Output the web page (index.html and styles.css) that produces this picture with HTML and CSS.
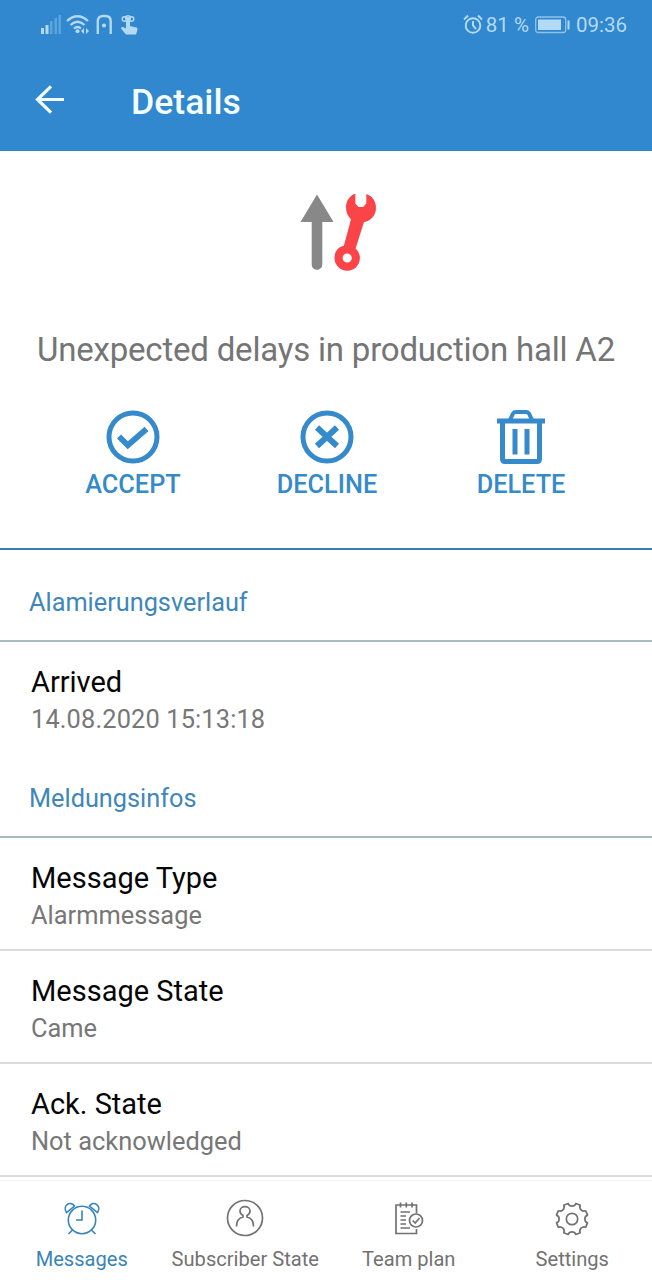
FILE: index.html
```html
<!DOCTYPE html>
<html lang="en">
<head>
<meta charset="utf-8">
<title>Details</title>
<link rel="stylesheet" href="styles.css">
</head>
<body>
<div class="app">
  <header class="header">
    <div class="status">
      <svg class="status-left" width="100" height="30" viewBox="0 0 100 30" fill="none">
        <g fill="#b4d9f3"><rect x="1" y="18" width="3" height="6"/><rect x="5.500" y="15" width="3" height="9"/></g>
        <g fill="#5ca4dc"><rect x="10" y="11" width="2.500" height="13"/><rect x="14.500" y="8" width="2.500" height="16"/><rect x="18.500" y="5" width="2.500" height="19"/></g>
        <g stroke="#b4d9f3" stroke-width="2.300"><path d="M27 11Q37.500 1.500 48 11M30.500 15Q37.500 8.500 44.500 15M34 18.500Q37.500 15.500 41 18.500"/><path d="M57.800 24V11Q57.800 6 63 6H65.500Q70.700 6 70.700 11V24" stroke-width="2.400"/></g>
        <g fill="#b4d9f3"><circle cx="37.500" cy="21.300" r="2"/><path d="M41 21l3-3v6zM49 21l-3-3v6z"/><circle cx="64" cy="15.500" r="2.100"/><path d="M86 8q2-2 4 0v8l6.500 1.500q1.500.5 1 2L96 24.500H86l-5-6q0-2 2-1.500l3 1.500z"/></g>
        <g stroke="#b4d9f3" stroke-width="1.400"><circle cx="84.500" cy="9" r="2.300"/><circle cx="91.500" cy="9" r="2.300"/><circle cx="88" cy="8" r="2.300"/></g>
      </svg>
      <div class="status-right">
        <svg width="20" height="22" viewBox="0 0 20 22" fill="none" stroke="#b4d9f3" stroke-width="2"><circle cx="10" cy="11.500" r="7.300"/><path d="M10 7V11.500l3 3.500M1 5.500l4-4M19 5.500l-4-4"/></svg>
        <span class="percent">81 %</span>
        <svg class="battery" width="36" height="18" viewBox="0 0 36 18"><rect x=".7" y="1" width="30" height="15.500" rx="2.500" fill="none" stroke="#8fc2ea" stroke-width="1.300"/><path d="M3 3.500h23v10.500H3zM32.500 4.500h2v9h-2z" fill="#b4d9f3"/></svg>
        <span class="clock">09:36</span>
      </div>
    </div>
    <div class="titlebar">
      <svg width="30" height="30" viewBox="0 0 30 30" fill="none" stroke="#f4fdff" stroke-width="3.200"><path d="M29 14.500H3M16 1.300L2.500 14.500 16 27.700"/></svg>
      <h1 class="title">Details</h1>
    </div>
  </header>
  <main>
    <section class="summary">
      <svg class="alarm-icon" width="78" height="80" viewBox="0 0 78 80">
        <path d="M17 2.500L33.500 30H22.300v42.500a5.300 5.300 0 0 1-10.600 0V30H.500z" fill="#888"/>
        <path d="M55.300 1.800C49.500 3.700 46 9 46 15.500c0 5 2 9 5 11.800L43.800 54C38 54.500 34.500 60 34.500 66a12.700 12.700 0 0 0 25.400 0c0-4-2-7.500-4.300-9.500L64 30C71 29 76 23 76 16c0-6.500-3.500-12-9.700-14v9.500l-3.200 3.500h-4.500l-3.300-3.500zM47.200 61.400a4.600 4.600 0 1 1 0 9.200 4.600 4.600 0 0 1 0-9.200z" fill="#fb4447" fill-rule="evenodd"/>
      </svg>
      <p class="subject">Unexpected delays in production hall A2</p>
      <div class="actions">
        <div class="action">
          <svg width="56" height="56" viewBox="0 0 56 56" fill="none" stroke="#348aca"><circle cx="28" cy="28" r="24" stroke-width="5"/><path d="M14 27.500l8.800 8.800L41.500 20" stroke-width="5.800"/></svg>
          <span>ACCEPT</span>
        </div>
        <div class="action">
          <svg width="56" height="56" viewBox="0 0 56 56" fill="none" stroke="#348aca"><circle cx="28" cy="28" r="24" stroke-width="5"/><path d="M18 18.500l20 18.500M38 18.500l-20 18.500" stroke-width="6"/></svg>
          <span>DECLINE</span>
        </div>
        <div class="action">
          <svg width="56" height="56" viewBox="0 0 56 56" fill="none" stroke="#348aca"><path d="M4 12h48" stroke-width="5"/><path d="M17 11l3-6.500q1-1.500 3-1.500h10q2 0 3 1.500l3 6.500" stroke-width="4"/><path d="M9.500 12v38q0 2.500 2.500 2.500h32q2.500 0 2.500-2.500V12" stroke-width="5"/><path d="M22 20v25.500M34 20v25.500" stroke-width="5"/></svg>
          <span>DELETE</span>
        </div>
      </div>
    </section>
    <h2 class="section">Alamierungsverlauf</h2>
    <div class="row first"><div class="label">Arrived</div><div class="value date">14.08.2020 15:13:18</div></div>
    <h2 class="section">Meldungsinfos</h2>
    <div class="row"><div class="label">Message Type</div><div class="value">Alarmmessage</div></div>
    <div class="row"><div class="label">Message State</div><div class="value">Came</div></div>
    <div class="row"><div class="label">Ack. State</div><div class="value">Not acknowledged</div></div>
  </main>
  <nav class="tabs">
    <div class="tab active">
      <svg width="40" height="40" viewBox="0 0 40 40" fill="none" stroke="currentColor" stroke-width="1.600"><circle cx="20" cy="21" r="13.700"/><path d="M20 11.500V21H14M10.500 31l-4 4M29.500 31l4 4M4.500 13.500C0 7 8 1 12.500 7zM35.500 13.500C40 7 32 1 27.500 7z"/></svg>
      <span>Messages</span>
    </div>
    <div class="tab">
      <svg width="40" height="40" viewBox="0 0 40 40" fill="none" stroke="currentColor" stroke-width="1.700"><circle cx="20" cy="19" r="17.500"/><path d="M11.500 27.500c0-5.500 2-8.500 6.500-9.500v-1.500c-2-1-3-2.500-3-4.500a5 4.300 0 0 1 10 0c0 2-1 3.500-3 4.500V18c4.500 1 6.500 4 6.500 9.500"/></svg>
      <span>Subscriber State</span>
    </div>
    <div class="tab">
      <svg width="40" height="40" viewBox="0 0 40 40" fill="none" stroke="currentColor" stroke-width="1.700"><path d="M27.500 14.500V6H7v28.500h20.500V30M11.500 3.500v5M17.300 3.500v5M23 3.500v5M11.500 13H21M11.500 17H17M11.500 21H17M11.500 25H17M11.500 29H21"/><circle cx="27" cy="21.500" r="6.500"/><path d="M23.700 21.500l2.500 2.500 4.300-5"/></svg>
      <span>Team plan</span>
    </div>
    <div class="tab">
      <svg width="40" height="40" viewBox="-20 -20 40 40" fill="none" stroke="currentColor" stroke-width="1.700" stroke-linejoin="round"><path d="M-3.900-15.500A4.200 4.200 0 0 0 3.900-15.500L8.200-13.700A4.200 4.200 0 0 0 13.700-8.200L15.500-3.900A4.200 4.200 0 0 0 15.500 3.900L13.700 8.200A4.200 4.200 0 0 0 8.200 13.700L3.900 15.500A4.200 4.200 0 0 0-3.900 15.500L-8.200 13.700A4.200 4.200 0 0 0-13.700 8.200L-15.500 3.900A4.200 4.200 0 0 0-15.500-3.900L-13.700-8.200A4.200 4.200 0 0 0-8.200-13.700Z"/><circle r="5.700"/></svg>
      <span>Settings</span>
    </div>
  </nav>
</div>
</body>
</html>
```
FILE: styles.css
```css
* { box-sizing: border-box; }
body, h1, h2, p { margin: 0; font-weight: 400; }
body { font-family: Roboto, "Liberation Sans", sans-serif; background: #fff; }
svg { display: block; flex: none; }
.app { width: 652px; height: 1280px; display: flex; flex-direction: column; overflow: hidden; }
.header { height: 151px; flex: none; background: #3188ce; }
.status { height: 50px; padding: 0 25px 0 40px; display: flex; justify-content: space-between; align-items: center; }
.status-right { display: flex; align-items: center; color: #b4d9f3; font-size: 20.5px; line-height: 50px; white-space: nowrap; }
.percent { margin: 0 6px 0 3px; }
.clock { margin-left: 5px; }
.titlebar { display: flex; align-items: center; height: 100px; padding-left: 35px; gap: 66px; }
.title { padding-top: 4px; font-size: 35.6px; font-weight: 500; line-height: 96px; color: #f4fdff; }
.summary { height: 399px; border-bottom: 2px solid #3a7fae; padding-top: 41px; }
.alarm-icon { margin-left: 300px; }
.subject { margin-top: 58px; text-align: center; font-size: 33px; letter-spacing: -0.2px; line-height: 40px; color: #757575; white-space: nowrap; }
.actions { display: flex; padding: 39px 34px 0 36px; }
.action { flex: 1; display: flex; flex-direction: column; align-items: center; font-size: 25.3px; font-weight: 500; line-height: 40px; color: #348aca; }
.section { height: 92px; padding: 19px 29px 0; border-bottom: 2px solid #a9b9c4; font-size: 25.3px; line-height: 68px; color: #3f87b9; }
.row { height: 113px; padding: 21px 31px 0; border-bottom: 2px solid #dcdcdc; }
.row.first { height: 104px; border: 0; }
.label { font-size: 29px; line-height: 38px; color: #060606; }
.value { font-size: 25.4px; line-height: 37px; color: #777; }
.value.date { letter-spacing: 0.13px; }
.tabs { flex: none; margin-top: 3px; height: 100px; border-top: 1px solid #f3f3f3; display: grid; grid-template-columns: repeat(4, 163.5px); padding-top: 18px; }
.tab { display: flex; flex-direction: column; align-items: center; font-size: 20.1px; line-height: 40px; color: #727272; white-space: nowrap; }
.tab.active { color: #3984b9; }
```
